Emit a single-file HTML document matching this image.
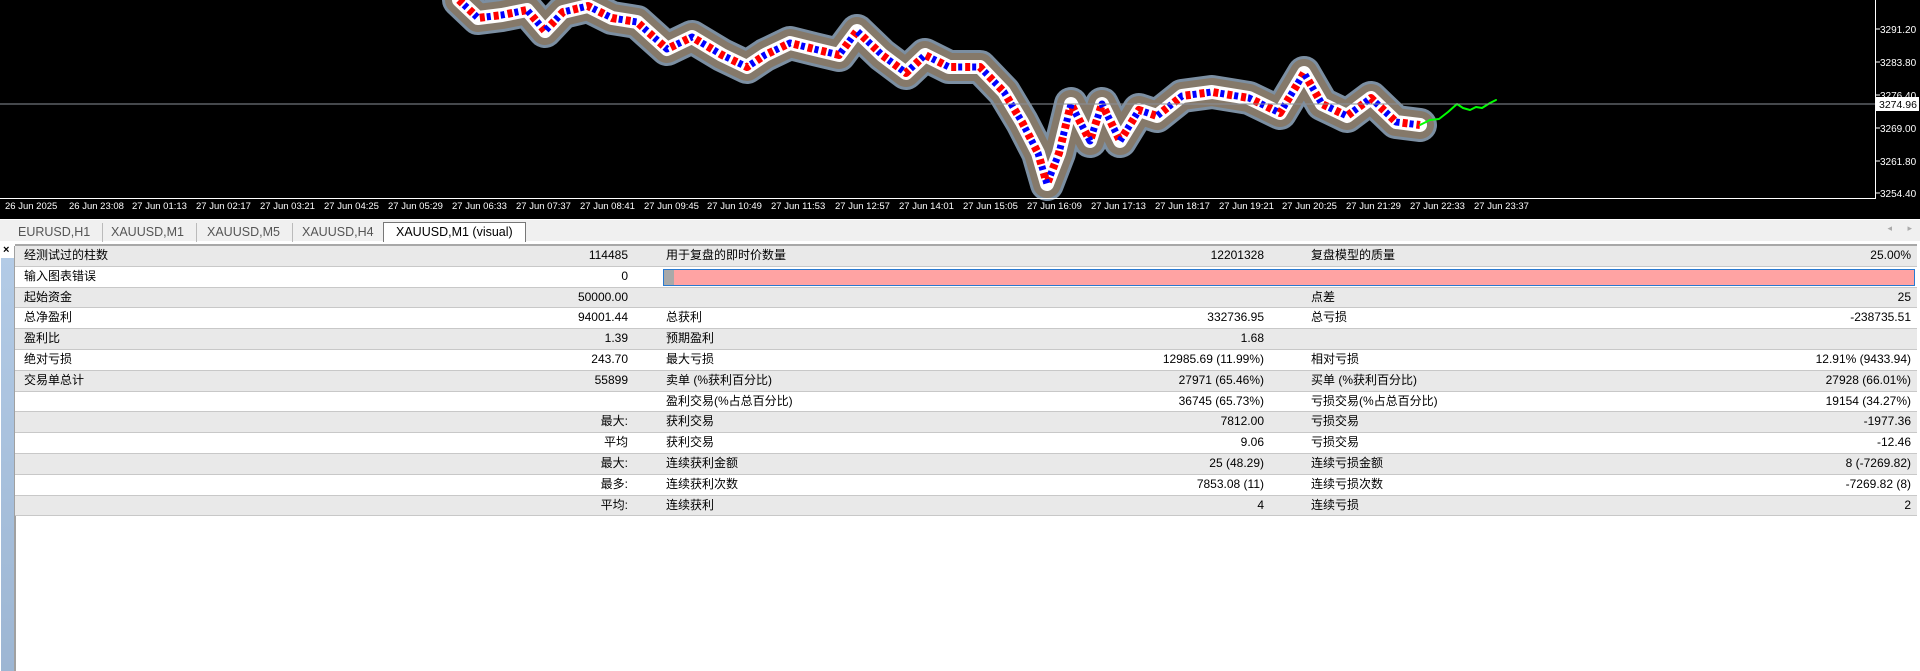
<!DOCTYPE html>
<html><head><meta charset="utf-8"><style>
*{margin:0;padding:0;box-sizing:border-box}
body{width:1920px;height:671px;overflow:hidden;background:#fff;font-family:"Liberation Sans","Noto Sans CJK SC",sans-serif;font-size:12px;color:#000;position:relative}
#chart{position:absolute;left:0;top:0;width:1920px;height:219px;background:#000}
#tabs{position:absolute;left:0;top:219px;width:1920px;height:22px;background:#f0f0f0;border-top:1px solid #fff}
.tab{position:absolute;top:3px;height:19px;line-height:18px;color:#555;font-size:12.5px;border-right:1px solid #bbb;padding:0 12px}
.tab.act{background:#fff;color:#000;border:1px solid #777;border-bottom:none;top:2px;height:20px}
#tbl{position:absolute;left:15px;top:246px;width:1902px}
.row{height:20.8px;border-bottom:1px solid #c8c8c8;position:relative;line-height:19px}
.row:nth-child(odd){background:#e9e9e9}
.row:nth-child(even){background:#fff}
.row span{position:absolute;white-space:nowrap}
.l1{left:9px}.v1{right:1289px;text-align:right}.l2{left:651px}.v2{right:653px}.l3{left:1296px}.v3{right:6px}
</style></head><body>
<div id="chart">
<svg width="1920" height="219" style="position:absolute;left:0;top:0">
<g fill="none" stroke-linejoin="round" stroke-linecap="round">
<polyline id="p" points="459,0 478,18 502,15 527,10 545,31 563,12 588,6 612,18 637,22 667,49 692,37 722,55 747,67 765,55 790,43 814,49 839,55 857,31 882,55 906,73 925,55 949,67 980,67 1004,92 1022,122 1038,153 1047,184 1059,153 1071,104 1090,141 1102,104 1120,141 1139,110 1157,116 1182,96 1212,92 1249,98 1280,113 1304,73 1322,104 1347,116 1371,98 1396,122 1420,125" stroke="#7c8fa2" stroke-width="34"/>
<polyline points="459,0 478,18 502,15 527,10 545,31 563,12 588,6 612,18 637,22 667,49 692,37 722,55 747,67 765,55 790,43 814,49 839,55 857,31 882,55 906,73 925,55 949,67 980,67 1004,92 1022,122 1038,153 1047,184 1059,153 1071,104 1090,141 1102,104 1120,141 1139,110 1157,116 1182,96 1212,92 1249,98 1280,113 1304,73 1322,104 1347,116 1371,98 1396,122 1420,125" stroke="#85796a" stroke-width="28"/>
<polyline points="459,0 478,18 502,15 527,10 545,31 563,12 588,6 612,18 637,22 667,49 692,37 722,55 747,67 765,55 790,43 814,49 839,55 857,31 882,55 906,73 925,55 949,67 980,67 1004,92 1022,122 1038,153 1047,184 1059,153 1071,104 1090,141 1102,104 1120,141 1139,110 1157,116 1182,96 1212,92 1249,98 1280,113 1304,73 1322,104 1347,116 1371,98 1396,122 1420,125" stroke="#fff" stroke-width="14"/>
<polyline points="459,0 478,18 502,15 527,10 545,31 563,12 588,6 612,18 637,22 667,49 692,37 722,55 747,67 765,55 790,43 814,49 839,55 857,31 882,55 906,73 925,55 949,67 980,67 1004,92 1022,122 1038,153 1047,184 1059,153 1071,104 1090,141 1102,104 1120,141 1139,110 1157,116 1182,96 1212,92 1249,98 1280,113 1304,73 1322,104 1347,116 1371,98 1396,122 1420,125" stroke="#f00" stroke-width="8" stroke-dasharray="5 9" stroke-linecap="butt"/>
<polyline points="459,0 478,18 502,15 527,10 545,31 563,12 588,6 612,18 637,22 667,49 692,37 722,55 747,67 765,55 790,43 814,49 839,55 857,31 882,55 906,73 925,55 949,67 980,67 1004,92 1022,122 1038,153 1047,184 1059,153 1071,104 1090,141 1102,104 1120,141 1139,110 1157,116 1182,96 1212,92 1249,98 1280,113 1304,73 1322,104 1347,116 1371,98 1396,122 1420,125" stroke="#00f" stroke-width="7" stroke-dasharray="4 10" stroke-dashoffset="7" stroke-linecap="butt"/>
<polyline points="1420,125 1430,120 1439,119 1448,112 1457,104 1463,108 1470,110 1476,107 1482,108 1490,103 1496,100" stroke="#0f0" stroke-width="2"/>
</g>
<line x1="0" y1="104" x2="1875" y2="104" stroke="#8a9098" stroke-width="1"/>
<line x1="1875.5" y1="0" x2="1875.5" y2="199" stroke="#fff"/>
<line x1="0" y1="198.5" x2="1876" y2="198.5" stroke="#fff"/>
<g fill="#fff" font-family="Liberation Sans, sans-serif" font-size="10">
<text x="1880" y="-0">3298.60</text>
<text x="1880" y="33">3291.20</text>
<text x="1880" y="66">3283.80</text>
<text x="1880" y="99">3276.40</text>
<text x="1880" y="132">3269.00</text>
<text x="1880" y="165">3261.80</text>
<text x="1880" y="197">3254.40</text>
</g>
<g stroke="#fff"><line x1="1876" y1="29" x2="1880" y2="29"/><line x1="1876" y1="62" x2="1880" y2="62"/><line x1="1876" y1="95" x2="1880" y2="95"/><line x1="1876" y1="128" x2="1880" y2="128"/><line x1="1876" y1="161" x2="1880" y2="161"/><line x1="1876" y1="193" x2="1880" y2="193"/></g>
<rect x="1876" y="97" width="43" height="14" fill="#fff"/>
<text x="1879" y="108" font-family="Liberation Sans, sans-serif" font-size="10.5" fill="#000">3274.96</text>
<g fill="#fff" font-family="Liberation Sans, sans-serif" font-size="9.5" id="tl"></g>
</svg>
</div>
<div id="tabs">
<div class="tab" style="left:6px">EURUSD,H1</div>
<div class="tab" style="left:99px">XAUUSD,M1</div>
<div class="tab" style="left:195px">XAUUSD,M5</div>
<div class="tab" style="left:290px">XAUUSD,H4</div>
<div class="tab act" style="left:383px">XAUUSD,M1 (visual)</div>
<div style="position:absolute;right:28px;top:3px;color:#aaa;font-size:9px">◂</div>
<div style="position:absolute;right:8px;top:3px;color:#aaa;font-size:9px">▸</div>
</div>
<div style="position:absolute;left:3px;top:244px;font-size:11px;font-weight:bold">×</div>
<div style="position:absolute;left:1px;top:258px;width:13px;height:413px;background:linear-gradient(#b3cbe6,#9db6d3)"></div>
<div style="position:absolute;left:14px;top:246px;width:2px;height:425px;background:#a0a0a0"></div>
<div style="position:absolute;left:15px;top:244px;width:1902px;height:2px;background:#a8a8a8"></div>
<div id="tbl">
<div class="row"><span class="l1">经测试过的柱数</span><span class="v1">114485</span><span class="l2">用于复盘的即时价数量</span><span class="v2">12201328</span><span class="l3">复盘模型的质量</span><span class="v3">25.00%</span></div>
<div class="row"><span class="l1">输入图表错误</span><span class="v1">0</span><div style="position:absolute;left:648px;top:2px;width:1252px;height:17px;border:1px solid #2a7ad0;background:#ffa3a3"><div style="width:10px;height:15px;background:#a9a9a9"></div></div></div>
<div class="row"><span class="l1">起始资金</span><span class="v1">50000.00</span><span class="l3">点差</span><span class="v3">25</span></div>
<div class="row"><span class="l1">总净盈利</span><span class="v1">94001.44</span><span class="l2">总获利</span><span class="v2">332736.95</span><span class="l3">总亏损</span><span class="v3">-238735.51</span></div>
<div class="row"><span class="l1">盈利比</span><span class="v1">1.39</span><span class="l2">预期盈利</span><span class="v2">1.68</span></div>
<div class="row"><span class="l1">绝对亏损</span><span class="v1">243.70</span><span class="l2">最大亏损</span><span class="v2">12985.69 (11.99%)</span><span class="l3">相对亏损</span><span class="v3">12.91% (9433.94)</span></div>
<div class="row"><span class="l1">交易单总计</span><span class="v1">55899</span><span class="l2">卖单 (%获利百分比)</span><span class="v2">27971 (65.46%)</span><span class="l3">买单 (%获利百分比)</span><span class="v3">27928 (66.01%)</span></div>
<div class="row"><span class="l2">盈利交易(%占总百分比)</span><span class="v2">36745 (65.73%)</span><span class="l3">亏损交易(%占总百分比)</span><span class="v3">19154 (34.27%)</span></div>
<div class="row"><span class="v1">最大:</span><span class="l2">获利交易</span><span class="v2">7812.00</span><span class="l3">亏损交易</span><span class="v3">-1977.36</span></div>
<div class="row"><span class="v1">平均</span><span class="l2">获利交易</span><span class="v2">9.06</span><span class="l3">亏损交易</span><span class="v3">-12.46</span></div>
<div class="row"><span class="v1">最大:</span><span class="l2">连续获利金额</span><span class="v2">25 (48.29)</span><span class="l3">连续亏损金额</span><span class="v3">8 (-7269.82)</span></div>
<div class="row"><span class="v1">最多:</span><span class="l2">连续获利次数</span><span class="v2">7853.08 (11)</span><span class="l3">连续亏损次数</span><span class="v3">-7269.82 (8)</span></div>
<div class="row"><span class="v1">平均:</span><span class="l2">连续获利</span><span class="v2">4</span><span class="l3">连续亏损</span><span class="v3">2</span></div>
</div>
<div style="position:absolute;left:0;top:0;width:1920px;height:219px;pointer-events:none">
<div style="position:absolute;top:201px;left:0;width:1880px;height:14px;font-size:9.5px;color:#fff;font-family:'Liberation Sans',sans-serif">
<span style="position:absolute;left:5px">26 Jun 2025</span>
<span style="position:absolute;left:69px">26 Jun 23:08</span>
<span style="position:absolute;left:132px">27 Jun 01:13</span>
<span style="position:absolute;left:196px">27 Jun 02:17</span>
<span style="position:absolute;left:260px">27 Jun 03:21</span>
<span style="position:absolute;left:324px">27 Jun 04:25</span>
<span style="position:absolute;left:388px">27 Jun 05:29</span>
<span style="position:absolute;left:452px">27 Jun 06:33</span>
<span style="position:absolute;left:516px">27 Jun 07:37</span>
<span style="position:absolute;left:580px">27 Jun 08:41</span>
<span style="position:absolute;left:644px">27 Jun 09:45</span>
<span style="position:absolute;left:707px">27 Jun 10:49</span>
<span style="position:absolute;left:771px">27 Jun 11:53</span>
<span style="position:absolute;left:835px">27 Jun 12:57</span>
<span style="position:absolute;left:899px">27 Jun 14:01</span>
<span style="position:absolute;left:963px">27 Jun 15:05</span>
<span style="position:absolute;left:1027px">27 Jun 16:09</span>
<span style="position:absolute;left:1091px">27 Jun 17:13</span>
<span style="position:absolute;left:1155px">27 Jun 18:17</span>
<span style="position:absolute;left:1219px">27 Jun 19:21</span>
<span style="position:absolute;left:1282px">27 Jun 20:25</span>
<span style="position:absolute;left:1346px">27 Jun 21:29</span>
<span style="position:absolute;left:1410px">27 Jun 22:33</span>
<span style="position:absolute;left:1474px">27 Jun 23:37</span>
</div>
</div>
</body></html>
